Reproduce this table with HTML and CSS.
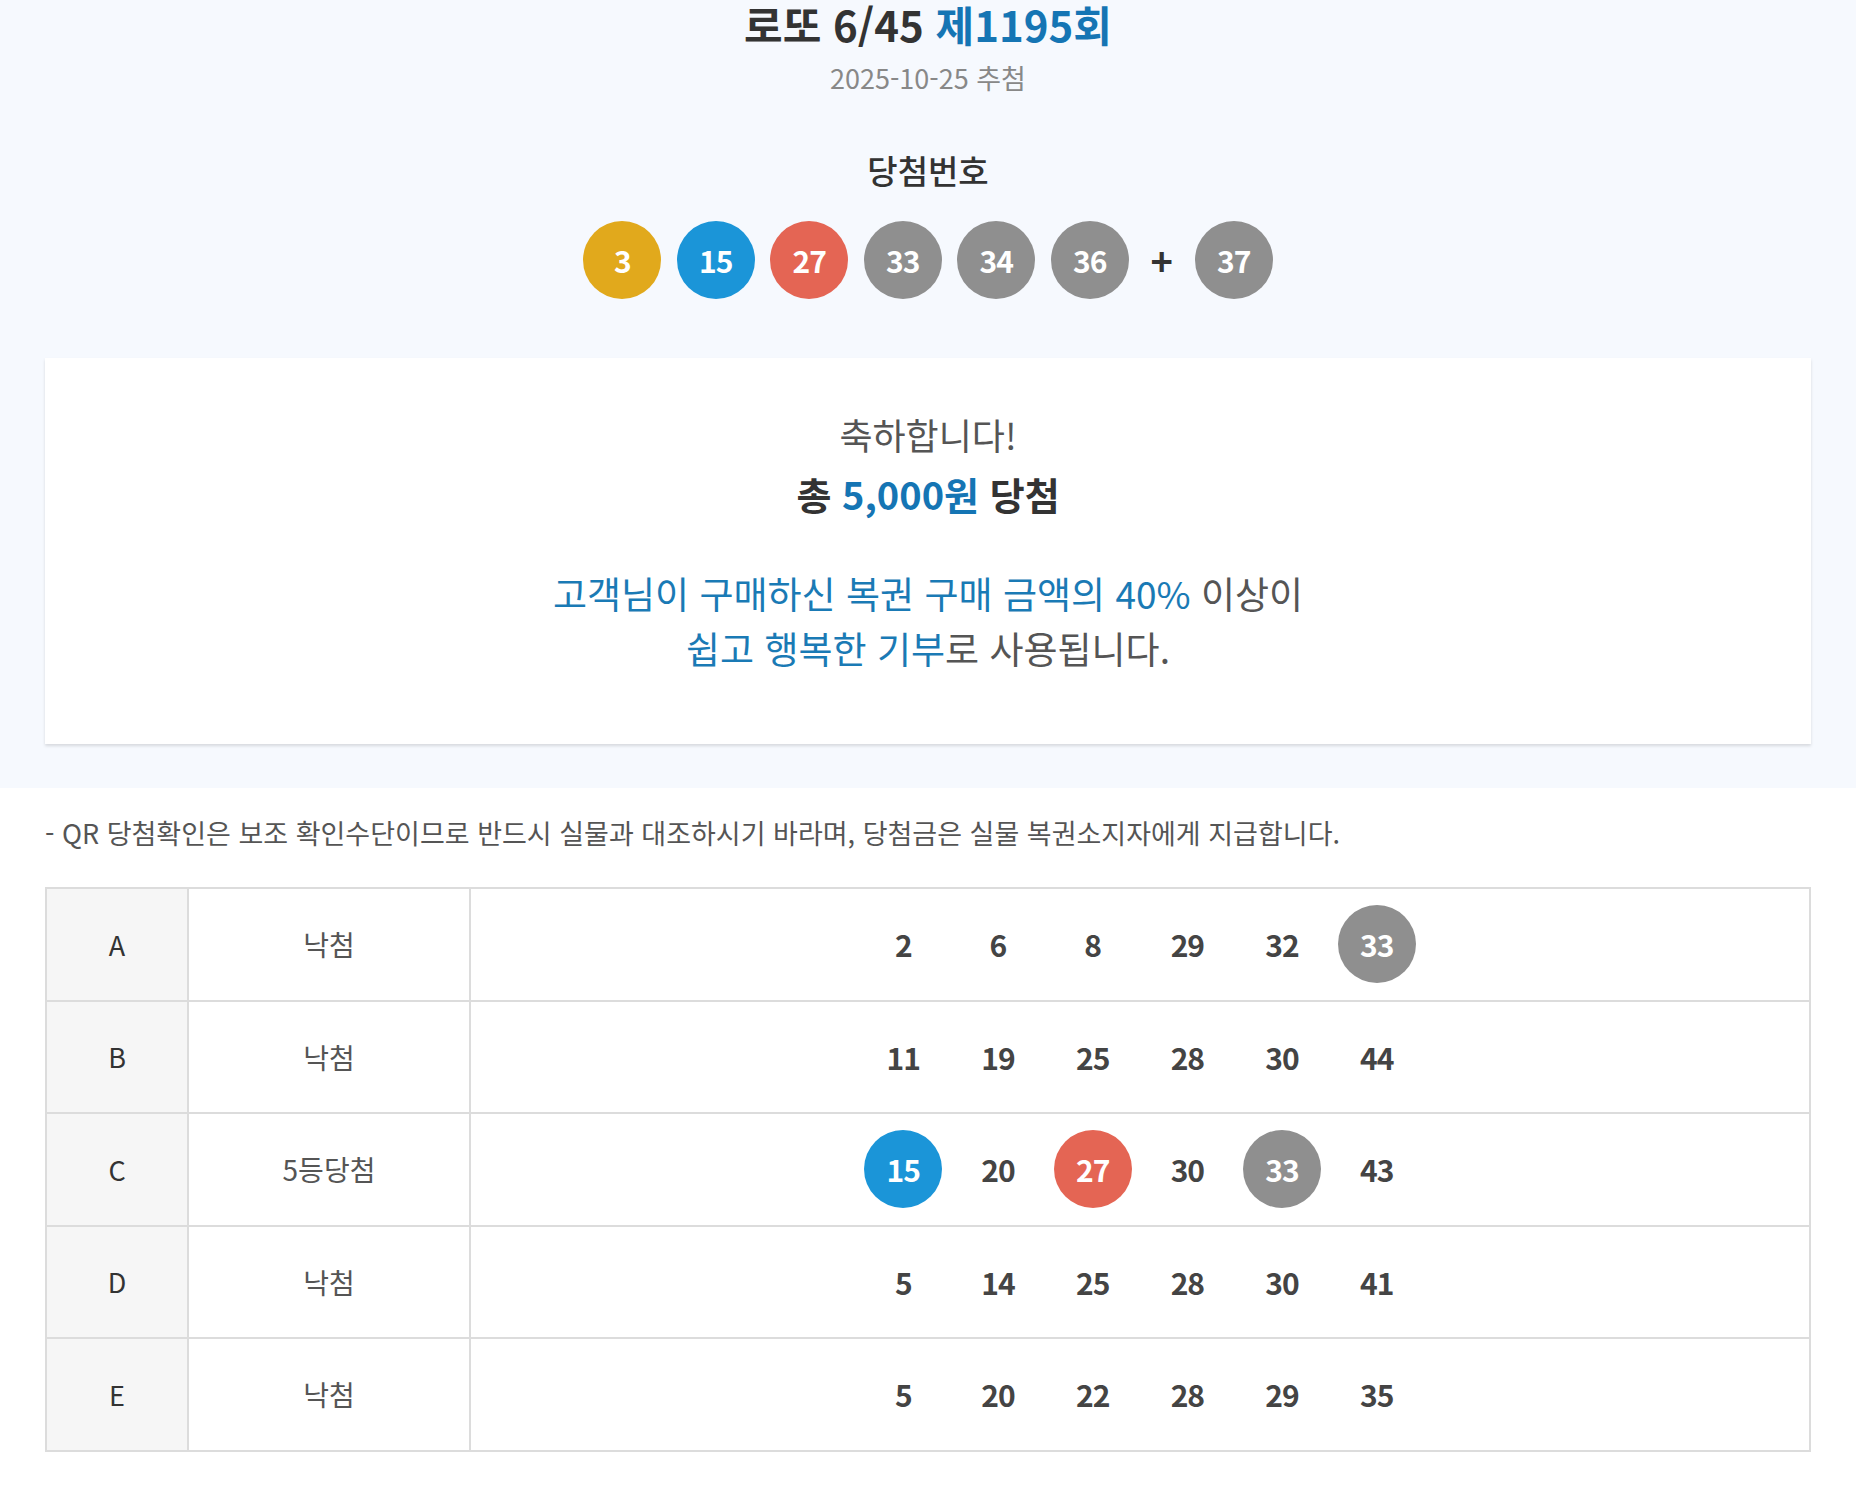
FILE: index.html
```html
<!DOCTYPE html>
<html lang="ko">
<head>
<meta charset="utf-8">
<title>로또 6/45 제1195회</title>
<link rel="stylesheet" href="styles.css">
</head>
<body>
<section class="top">
  <h1 class="title">로또 6/45 <span class="blue">제1195회</span></h1>
  <p class="date">2025-10-25 추첨</p>
  <h2 class="sub">당첨번호</h2>
  <div class="balls">
    <span class="ball yellow">3</span>
    <span class="ball blue-bg">15</span>
    <span class="ball red">27</span>
    <span class="ball gray">33</span>
    <span class="ball gray">34</span>
    <span class="ball gray">36</span>
    <span class="plus">+</span>
    <span class="ball gray">37</span>
  </div>
  <div class="card">
    <p class="congrats">축하합니다!</p>
    <p class="total">총 <span class="blue">5,000원</span> 당첨</p>
    <p class="donate"><span class="blue">고객님이 구매하신 복권 구매 금액의 40%</span> 이상이<br><span class="blue">쉽고 행복한 기부</span>로 사용됩니다.</p>
  </div>
</section>
<section class="bottom">
  <p class="notice">- QR 당첨확인은 보조 확인수단이므로 반드시 실물과 대조하시기 바라며, 당첨금은 실물 복권소지자에게 지급합니다.</p>
  <table class="result">
    <tr>
      <td class="c-label">A</td>
      <td class="c-status">낙첨</td>
      <td class="c-nums"><div class="nums"><span class="num">2</span><span class="num">6</span><span class="num">8</span><span class="num">29</span><span class="num">32</span><span class="num hit gray">33</span></div></td>
    </tr>
    <tr>
      <td class="c-label">B</td>
      <td class="c-status">낙첨</td>
      <td class="c-nums"><div class="nums"><span class="num">11</span><span class="num">19</span><span class="num">25</span><span class="num">28</span><span class="num">30</span><span class="num">44</span></div></td>
    </tr>
    <tr>
      <td class="c-label">C</td>
      <td class="c-status">5등당첨</td>
      <td class="c-nums"><div class="nums"><span class="num hit blue-bg">15</span><span class="num">20</span><span class="num hit red">27</span><span class="num">30</span><span class="num hit gray">33</span><span class="num">43</span></div></td>
    </tr>
    <tr>
      <td class="c-label">D</td>
      <td class="c-status">낙첨</td>
      <td class="c-nums"><div class="nums"><span class="num">5</span><span class="num">14</span><span class="num">25</span><span class="num">28</span><span class="num">30</span><span class="num">41</span></div></td>
    </tr>
    <tr>
      <td class="c-label">E</td>
      <td class="c-status">낙첨</td>
      <td class="c-nums"><div class="nums"><span class="num">5</span><span class="num">20</span><span class="num">22</span><span class="num">28</span><span class="num">29</span><span class="num">35</span></div></td>
    </tr>
  </table>
</section>
</body>
</html>
```
FILE: styles.css
```css
* { box-sizing: border-box; }
html, body { margin: 0; padding: 0; background: #fff; }
body {
  font-family: "Noto Sans CJK KR", "Noto Sans", sans-serif;
  color: #333;
}
p, h1, h2 { margin: 0; }
.blue { color: #1575b4; }

.top {
  background: #f6f9fe;
  padding: 3px 45px 44px;
  text-align: center;
}
.title {
  font-size: 42px;
  line-height: 42px;
  font-weight: 700;
  color: #333;
}
.date {
  margin-top: 18px;
  font-size: 27px;
  line-height: 30px;
  color: #888;
}
.sub {
  margin-top: 57px;
  font-size: 33px;
  line-height: 40px;
  font-weight: 500;
  color: #333;
}
.balls {
  margin-top: 31px;
  display: flex;
  justify-content: center;
  align-items: center;
  gap: 15.5px;
}
.ball {
  width: 78px;
  height: 78px;
  border-radius: 50%;
  display: flex;
  align-items: center;
  justify-content: center;
  color: #fff;
  font-size: 30px;
  font-weight: 700;
  letter-spacing: -1px;
}
.yellow { background: #e1a91c; }
.blue-bg { background: #1b95d8; }
.red { background: #e46554; }
.gray { background: #8f8f8f; }
.plus {
  font-size: 38px;
  font-weight: 700;
  color: #333;
  width: 35px;
  text-align: center;
  line-height: 78px;
}
.card {
  margin-top: 59px;
  background: #fff;
  box-shadow: 0 2px 3px rgba(0,0,0,0.13);
  height: 386px;
  padding-top: 54px;
}
.congrats {
  font-size: 36px;
  line-height: 44px;
  color: #555;
}
.total {
  margin-top: 13px;
  font-size: 38px;
  line-height: 50px;
  font-weight: 700;
  color: #333;
}
.donate {
  margin-top: 47px;
  font-size: 37px;
  line-height: 55px;
  color: #555;
}
.donate .blue { color: #1a7ab5; }

.bottom {
  padding: 25px 45px 40px;
}
.notice {
  font-size: 27px;
  line-height: 40px;
  color: #555;
}
.result {
  margin-top: 34px;
  width: 100%;
  border-collapse: collapse;
  border: 2px solid #dcdcdc;
}
.result td {
  border: 2px solid #dcdcdc;
  height: 112.5px;
  text-align: center;
  padding: 0;
}
.c-label {
  width: 142px;
  background: #f6f6f6;
  font-size: 27px;
  color: #333;
}
.c-status {
  width: 282px;
  font-size: 28px;
  color: #555;
}
.nums {
  display: flex;
  justify-content: center;
  gap: 16.7px;
}
.num {
  width: 78px;
  height: 78px;
  border-radius: 50%;
  display: flex;
  align-items: center;
  justify-content: center;
  font-size: 30px;
  font-weight: 700;
  color: #444;
  letter-spacing: -1px;
}
.num.hit { color: #fff; }
```
